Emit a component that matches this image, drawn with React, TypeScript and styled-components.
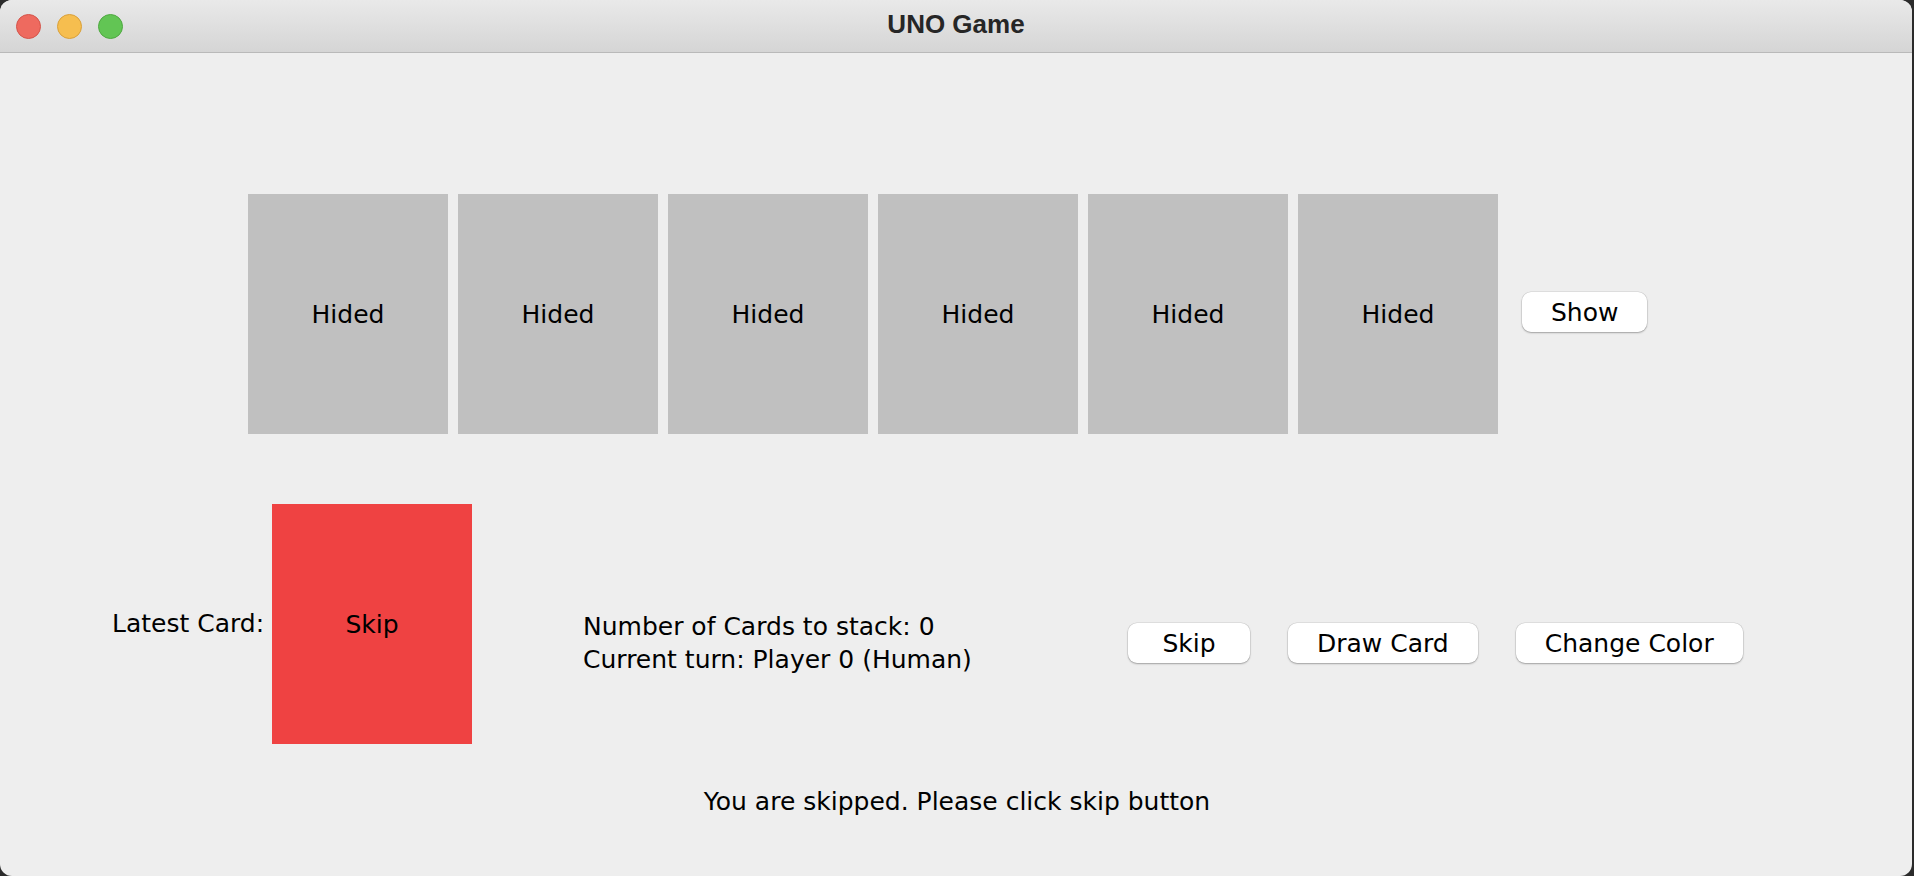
import React from "react";
import styled, { createGlobalStyle } from "styled-components";

const GlobalStyle = createGlobalStyle`
  html, body {
    margin: 0;
    padding: 0;
    background: #2b2b2b;
    overflow: hidden;
  }
  body {
    font-family: "DejaVu Sans", "Liberation Sans", sans-serif;
    color: #000;
  }
`;

const Window = styled.div`
  width: 1912px;
  height: 876px;
  border-radius: 12px;
  overflow: hidden;
  background: #eeeeee;
  display: flex;
  flex-direction: column;
`;

const TitleBar = styled.div`
  height: 52px;
  flex: none;
  display: grid;
  grid-template-columns: 1fr auto 1fr;
  align-items: center;
  background: linear-gradient(#e9e9e9, #d5d5d5);
  border-bottom: 1px solid #b9b9b9;
`;

const Lights = styled.div`
  display: flex;
  gap: 16px;
  padding-left: 16px;
`;

const Light = styled.span<{ $fill: string; $edge: string }>`
  width: 23px;
  height: 23px;
  border-radius: 50%;
  background: ${(p) => p.$fill};
  border: 0.5px solid ${(p) => p.$edge};
`;

const Title = styled.div`
  font-family: "Liberation Sans", Arial, sans-serif;
  font-weight: bold;
  font-size: 26px;
  color: #262626;
  margin-top: -3px;
`;

const Content = styled.div`
  flex: 1;
  display: flex;
  flex-direction: column;
  padding-top: 141px;
  font-size: 25px;
`;

const CardRow = styled.div`
  display: flex;
  align-items: center;
  gap: 10px;
  padding-left: 248px;
`;

const Card = styled.div<{ $color: string }>`
  width: 200px;
  height: 240px;
  flex: none;
  background: ${(p) => p.$color};
  display: flex;
  align-items: center;
  justify-content: center;
  font-size: 25px;
`;

const Button = styled.button<{ $minWidth?: number }>`
  height: 40px;
  min-width: ${(p) => p.$minWidth ?? 0}px;
  padding: 0 29px;
  border: none;
  border-radius: 9px;
  background: #ffffff;
  box-shadow: 0 0 0 0.5px rgba(0, 0, 0, 0.12), 0 1px 2px rgba(0, 0, 0, 0.28);
  font-family: "DejaVu Sans", "Liberation Sans", sans-serif;
  font-size: 25px;
  color: #000;
  display: inline-flex;
  align-items: center;
  justify-content: center;
  flex: none;
`;

const ShowButton = styled(Button)`
  margin-left: 14px;
  margin-top: -4px;
`;

const PlayRow = styled.div`
  margin-top: 70px;
  display: flex;
  align-items: center;
  padding-left: 112px;
`;

const Label = styled.div`
  width: 160px;
  flex: none;
  line-height: 32px;
`;

const RightGroup = styled.div`
  display: flex;
  align-items: center;
  margin-top: 38px;
  padding-left: 111px;
`;

const Info = styled.div`
  width: 545px;
  flex: none;
  line-height: 33px;
`;

const Actions = styled.div`
  display: flex;
  gap: 38px;
`;

const Message = styled.div`
  margin-top: 42px;
  line-height: 32px;
  text-align: center;
  padding-left: 2px;
`;

export default function App() {
  const hidden = Array.from({ length: 6 });
  return (
    <>
      <GlobalStyle />
      <Window>
        <TitleBar>
          <Lights>
            <Light $fill="#ee6a5f" $edge="#d4544a" />
            <Light $fill="#f6be4f" $edge="#d9a03a" />
            <Light $fill="#62c554" $edge="#4ea840" />
          </Lights>
          <Title>UNO Game</Title>
          <div />
        </TitleBar>
        <Content>
          <CardRow>
            {hidden.map((_, i) => (
              <Card key={i} $color="#c0c0c0">
                Hided
              </Card>
            ))}
            <ShowButton>Show</ShowButton>
          </CardRow>
          <PlayRow>
            <Label>Latest Card:</Label>
            <Card $color="#ef4242">Skip</Card>
            <RightGroup>
              <Info>
                Number of Cards to stack: 0
                <br />
                Current turn: Player 0 (Human)
              </Info>
              <Actions>
                <Button $minWidth={122}>Skip</Button>
                <Button>Draw Card</Button>
                <Button>Change Color</Button>
              </Actions>
            </RightGroup>
          </PlayRow>
          <Message>You are skipped. Please click skip button</Message>
        </Content>
      </Window>
    </>
  );
}
